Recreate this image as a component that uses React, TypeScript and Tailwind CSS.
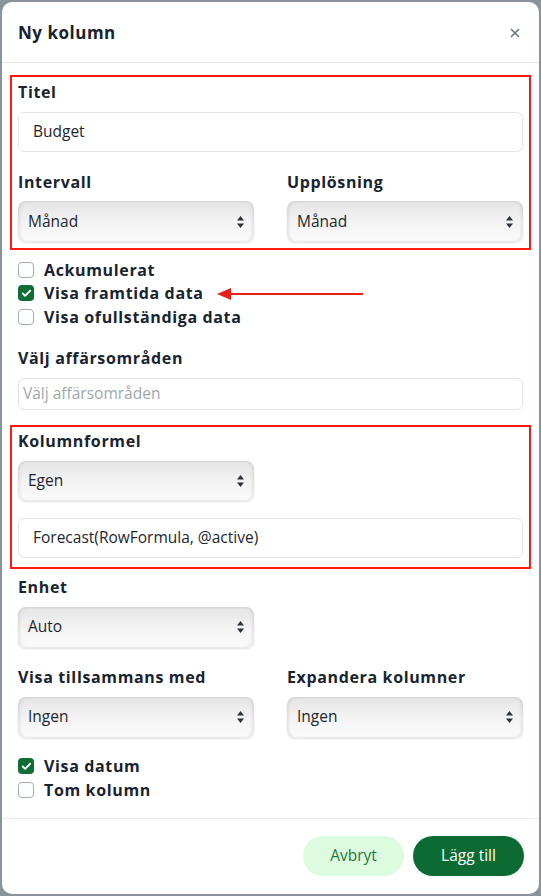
import { Check, X } from "lucide-react";

const font = { fontFamily: '"Open Sans", "Noto Sans", sans-serif' };

function Label({ children }: { children: React.ReactNode }) {
  return (
    <div className="h-[18px] flex items-center text-[16px] font-bold tracking-[0.04em] text-[#18242f] leading-none">
      {children}
    </div>
  );
}

function Select({ value, className = "" }: { value: string; className?: string }) {
  return (
    <div
      className={`h-[41px] rounded-[8px] bg-gradient-to-b from-[#e4e4e4] via-[#f3f3f3] to-[#fbfbfb] shadow-[inset_2px_0_3px_rgba(0,0,0,0.08),inset_-2px_0_3px_rgba(0,0,0,0.08),0_1px_2px_rgba(0,0,0,0.12)] flex items-center justify-between pl-[10px] pr-[9px] ${className}`}
    >
      <span className="text-[15.5px] text-[#1c2630]">{value}</span>
      <svg width="9" height="14" viewBox="0 0 9 14">
        <path d="M4.5 1 L8 5.5 L1 5.5 Z" fill="#2a3138" />
        <path d="M4.5 13 L8 8.5 L1 8.5 Z" fill="#2a3138" />
      </svg>
    </div>
  );
}

function TextInput({ value, placeholder, h = "h-[40px]", pl = "pl-[14px]" }: { value?: string; placeholder?: string; h?: string; pl?: string }) {
  return (
    <div className={`${h} ${pl} rounded-[6px] border border-[#e1e5e9] bg-white flex items-center text-[15.5px]`}>
      {value ? <span className="text-[#1c2630]">{value}</span> : <span className="text-[#a0a7ad]">{placeholder}</span>}
    </div>
  );
}

function Checkbox({ label, checked }: { label: string; checked?: boolean }) {
  return (
    <div className="h-[23.5px] flex items-center gap-[10px]">
      {checked ? (
        <div className="w-[16px] h-[16px] rounded-[4px] bg-[#0e6e36] flex items-center justify-center">
          <Check size={11} strokeWidth={4} className="text-white" />
        </div>
      ) : (
        <div className="w-[16px] h-[16px] rounded-[4px] border-[1.5px] border-[#a3acb3] bg-white" />
      )}
      <span className="text-[16px] font-bold tracking-[0.04em] text-[#18242f]">{label}</span>
    </div>
  );
}

export default function App() {
  return (
    <div className="w-[541px] h-[896px] bg-[#89939a] p-[2px]" style={font}>
      <div className="h-full bg-white rounded-[10px] flex flex-col overflow-hidden">
        {/* Header */}
        <div className="h-[61px] shrink-0 border-b border-[#e3e6e9] flex items-center justify-between pl-[16px] pr-[17px] pt-[2px]">
          <span className="text-[17px] font-bold tracking-[0.03em] text-[#17232e]">Ny kolumn</span>
          <X size={14} strokeWidth={3} className="text-[#6d7b82]" />
        </div>

        {/* Body */}
        <div className="flex-1 px-[8px] pt-[12px]">
          <div className="border-2 border-[#ff1a10] px-[6px] pt-[6px] pb-[6px]">
            <Label>Titel</Label>
            <div className="mt-[11px]">
              <TextInput value="Budget" />
            </div>
            <div className="grid grid-cols-2 gap-x-[33px] mt-[21px]">
              <Label>Intervall</Label>
              <Label>Upplösning</Label>
              <Select value="Månad" className="mt-[10px]" />
              <Select value="Månad" className="mt-[10px]" />
            </div>
          </div>

          <div className="relative px-[8px] mt-[8px]">
            <Checkbox label="Ackumulerat" />
            <Checkbox label="Visa framtida data" checked />
            <Checkbox label="Visa ofullständiga data" />
            <svg className="absolute left-[206px] top-[28px]" width="148" height="16" viewBox="0 0 148 16">
              <path d="M12 8 H147" stroke="#ea1f1a" strokeWidth="2" />
              <path d="M1 8 L15 2 L15 14 Z" fill="#ea1f1a" />
            </svg>
          </div>

          <div className="px-[8px] mt-[20px]">
            <Label>Välj affärsområden</Label>
            <div className="mt-[11px]">
              <TextInput placeholder="Välj affärsområden" h="h-[32px]" pl="pl-[4px]" />
            </div>
          </div>

          <div className="border-2 border-[#ff1a10] px-[6px] pt-[5px] pb-[9px] mt-[15px]">
            <Label>Kolumnformel</Label>
            <Select value="Egen" className="mt-[11px] w-[236px] !h-[40px]" />
            <div className="mt-[17px]">
              <TextInput value="Forecast(RowFormula, @active)" />
            </div>
          </div>

          <div className="px-[8px] mt-[9px]">
            <Label>Enhet</Label>
            <Select value="Auto" className="mt-[11px] w-[236px]" />
            <div className="grid grid-cols-2 gap-x-[33px] mt-[20px]">
              <Label>Visa tillsammans med</Label>
              <Label>Expandera kolumner</Label>
              <Select value="Ingen" className="mt-[11px]" />
              <Select value="Ingen" className="mt-[11px]" />
            </div>
            <div className="mt-[17px]">
              <Checkbox label="Visa datum" checked />
              <Checkbox label="Tom kolumn" />
            </div>
          </div>
        </div>

        {/* Footer */}
        <div className="h-[76px] shrink-0 border-t border-[#e9ecee] flex items-start justify-end gap-[9px] pt-[17px] pr-[15px]">
          <button className="h-[40px] w-[101px] rounded-full bg-[#dcfbdf] text-[15.5px] font-medium text-[#1d7a3e]">
            Avbryt
          </button>
          <button className="h-[40px] w-[111px] rounded-full bg-[#0b6b32] text-[15.5px] font-medium text-white">
            Lägg till
          </button>
        </div>
      </div>
    </div>
  );
}
